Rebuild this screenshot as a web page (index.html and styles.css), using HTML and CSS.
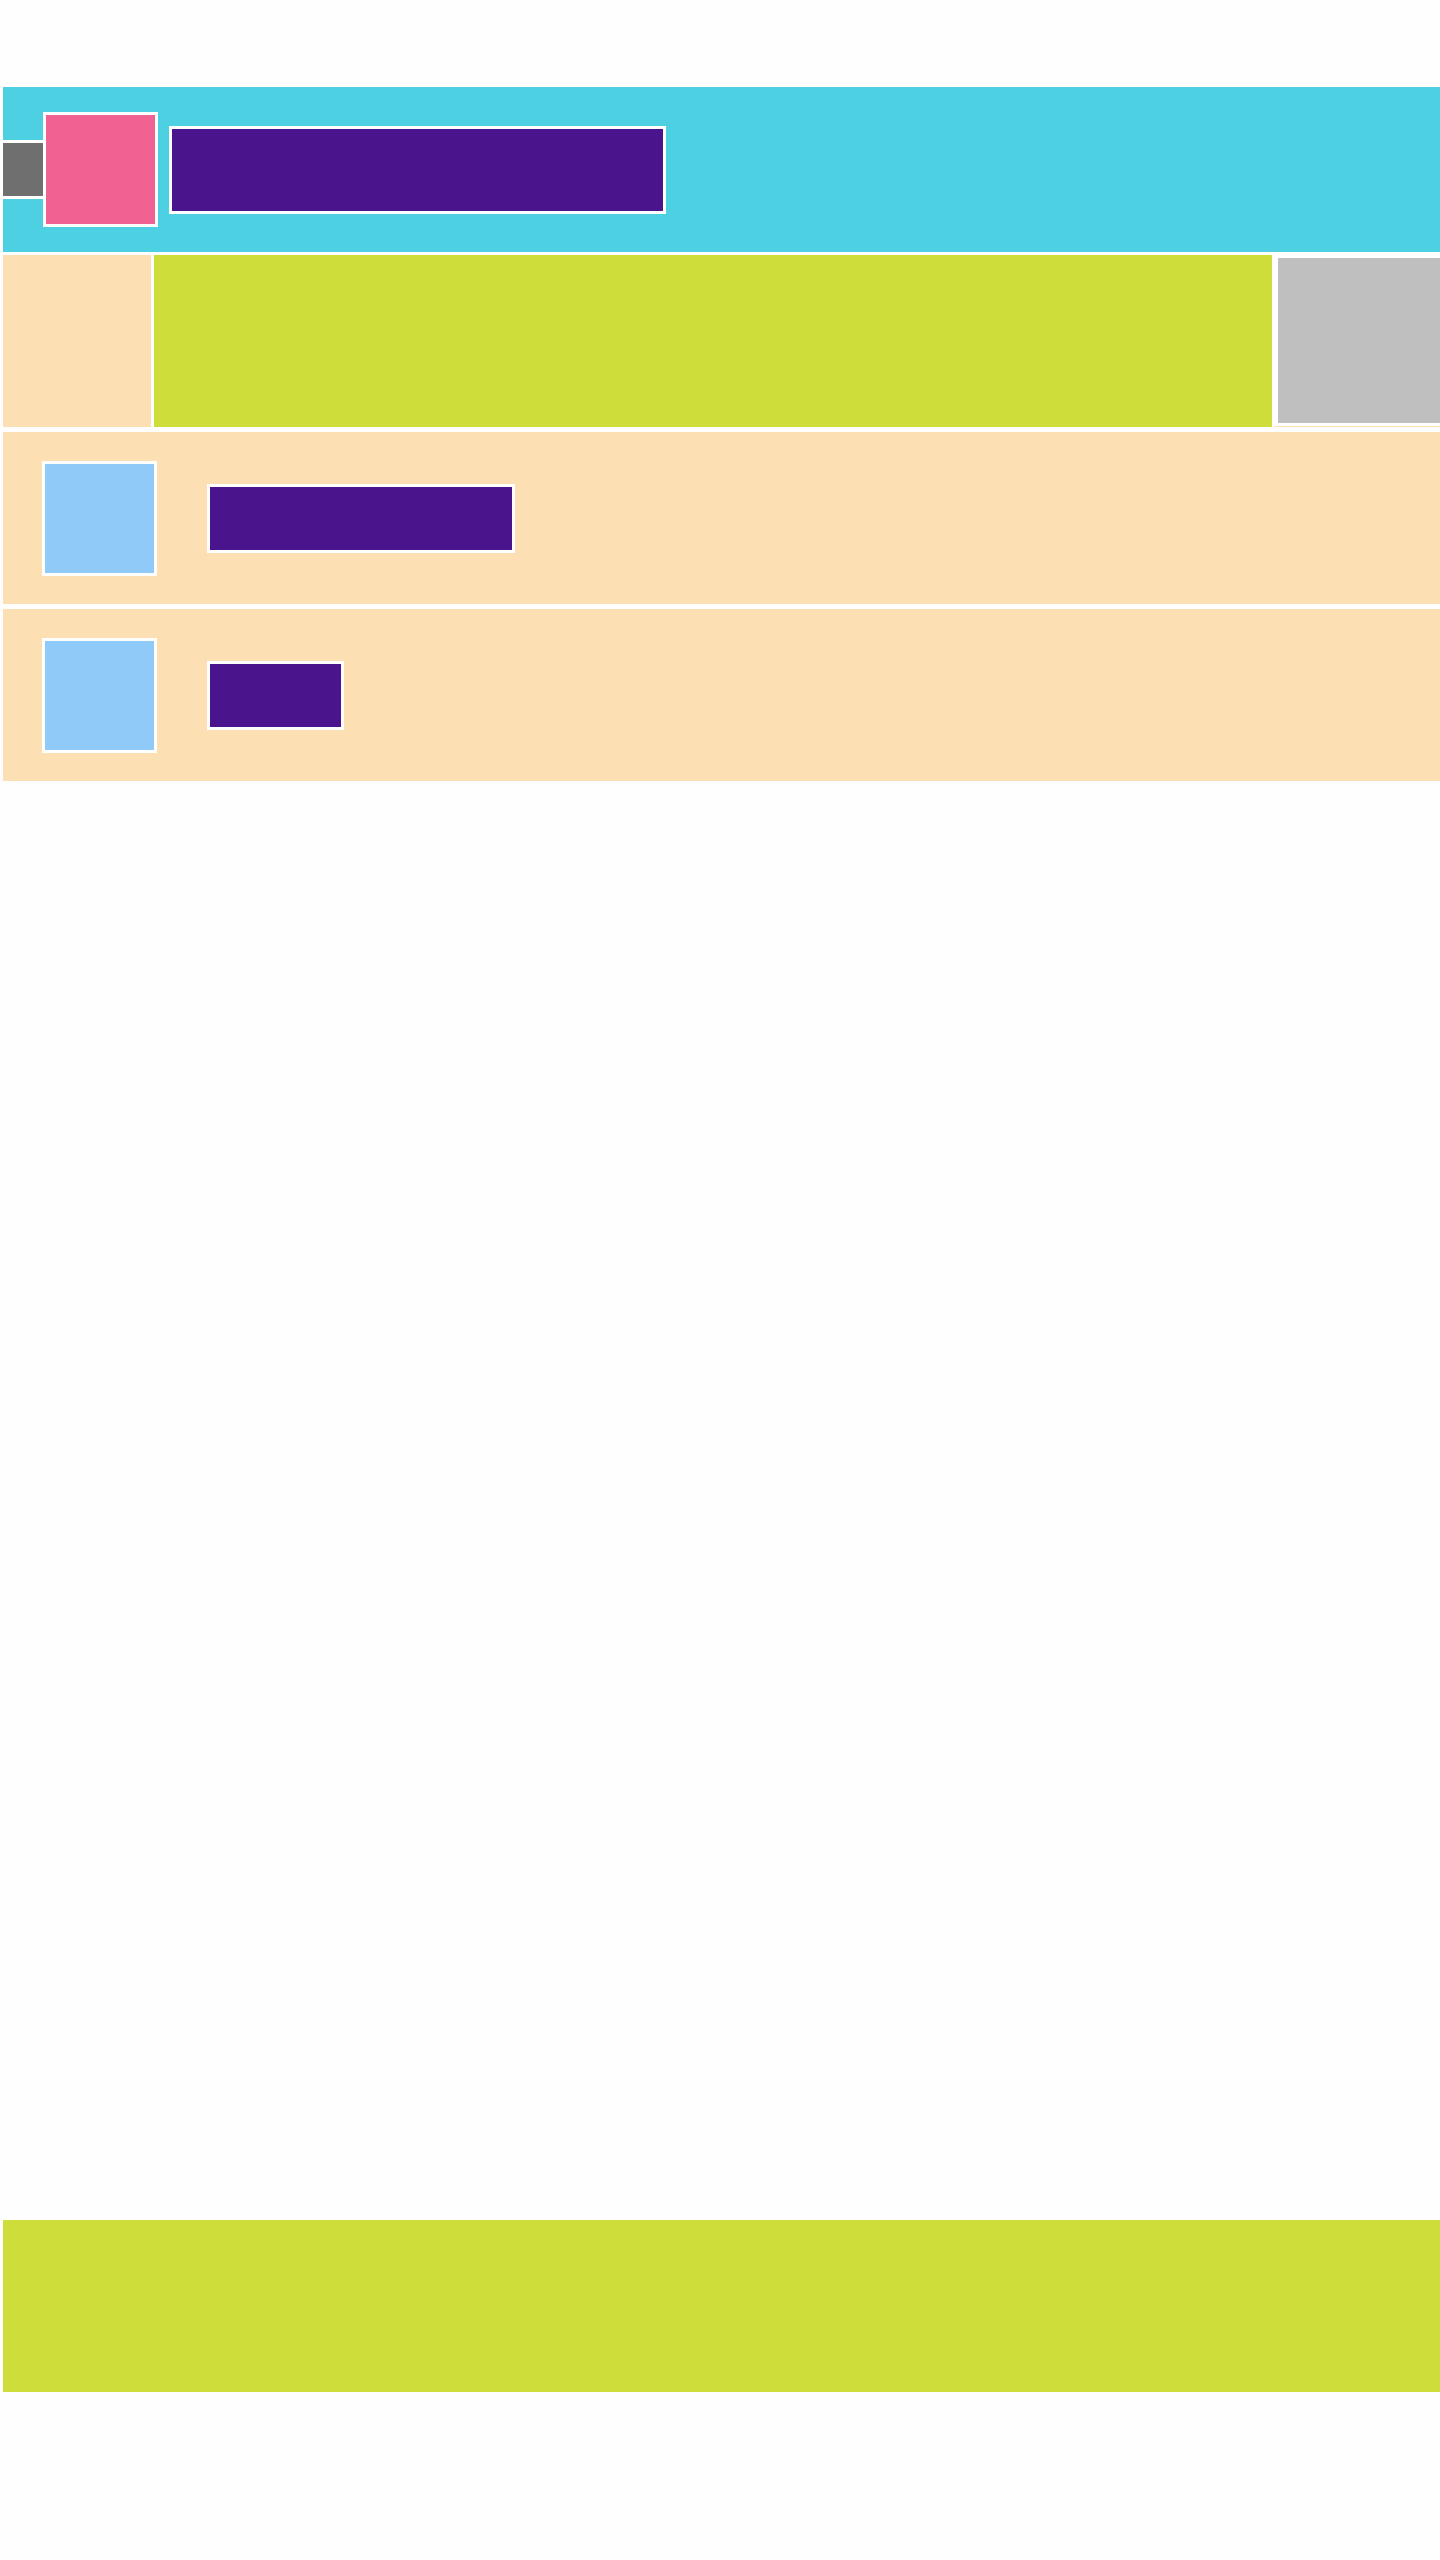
FILE: index.html
```html
<!DOCTYPE html>
<html lang="en">
<head>
<meta charset="utf-8">
<title>Layout</title>
<link rel="stylesheet" href="styles.css">
</head>
<body>
<div class="page">
  <header class="header">
    <div class="menu-btn"></div>
    <div class="logo"></div>
    <div class="title"></div>
  </header>
  <section class="main-row">
    <aside class="sidebar"></aside>
    <div class="content"></div>
    <div class="right-col"><div class="ad"></div></div>
  </section>
  <section class="item">
    <div class="thumb"></div>
    <div class="label label-wide"></div>
  </section>
  <section class="item">
    <div class="thumb"></div>
    <div class="label label-short"></div>
  </section>
  <footer class="footer"></footer>
</div>
</body>
</html>
```

FILE: styles.css
```css
*, *::before, *::after {
  box-sizing: border-box;
}
html, body {
  margin: 0;
  padding: 0;
  background: #fefefe;
  font-family: "Liberation Sans", Arial, sans-serif;
}
.page {
  padding: 87px 0 0 3px;
  min-height: 2560px;
}
.header {
  height: 165px;
  background: #4dd0e1;
  display: flex;
  align-items: center;
}
.menu-btn {
  flex: none;
  width: 40px;
  height: 59px;
  background: #6f6f6f;
  border-top: 3px solid #fff;
  border-bottom: 3px solid #fff;
}
.logo {
  flex: none;
  width: 115px;
  height: 115px;
  background: #f06292;
  border: 3px solid #fff;
}
.title {
  flex: none;
  margin-left: 11px;
  width: 497px;
  height: 88px;
  background: #4a148c;
  border: 3px solid #fff;
}
.main-row {
  margin-top: 3px;
  height: 172px;
  display: flex;
}
.sidebar {
  flex: none;
  width: 148px;
  background: #fddfb4;
}
.content {
  flex: none;
  margin-left: 3px;
  width: 1118px;
  background: #cfdd3a;
}
.right-col {
  margin-left: 3px;
  flex: 1;
  background: #fddfb4;
}
.ad {
  height: 171px;
  background: #bfbfbf;
  border: 3px solid #fff;
  border-right: 0;
}
.item {
  margin-top: 5px;
  height: 172px;
  background: #fddfb4;
  display: flex;
  align-items: center;
  padding-left: 39px;
}
.thumb {
  flex: none;
  width: 115px;
  height: 115px;
  background: #90caf9;
  border: 3px solid #fff;
}
.label {
  flex: none;
  margin-left: 50px;
  height: 69px;
  background: #4a148c;
  border: 3px solid #fff;
}
.label-wide { width: 308px; }
.label-short { width: 137px; }
.footer {
  margin-top: 1439px;
  height: 172px;
  background: #cfdd3a;
}
```
